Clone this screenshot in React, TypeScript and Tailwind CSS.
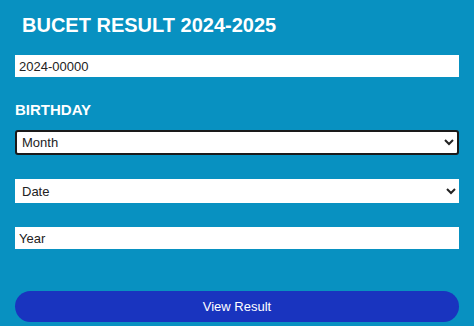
import React from "react";

export default function App() {
  return (
    <div
      className="w-[474px] h-[326px] overflow-hidden bg-[#0891c1] px-[15px]"
      style={{ fontFamily: '"Liberation Sans", Arial, sans-serif' }}
    >
      <h1 className="pt-[14px] pl-[7px] text-[20px] leading-[23px] font-bold text-white">
        BUCET RESULT 2024-2025
      </h1>
      <input
        defaultValue="2024-00000"
        className="mt-[18px] block w-full h-[22px] bg-white px-[4px] text-[13px] text-[#222] outline-none"
      />
      <div className="mt-[24px] text-[15px] leading-[17px] font-bold text-white">BIRTHDAY</div>
      <select
        defaultValue="Month"
        className="mt-[12px] block w-full h-[25px] bg-white rounded-[3px] border-2 border-[#1a1a1a] px-[1px] text-[13px] text-[#222] outline-none"
      >
        <option>Month</option>
      </select>
      <select
        defaultValue="Date"
        className="mt-[24px] block w-full h-[24px] bg-white px-[3px] text-[13px] text-[#222] outline-none"
      >
        <option>Date</option>
      </select>
      <input
        defaultValue="Year"
        className="mt-[24px] block w-full h-[22px] bg-white px-[4px] text-[13px] text-[#222] outline-none"
      />
      <button className="mt-[42px] block w-full h-[31px] rounded-full bg-[#1934bf] text-[13px] text-white">
        View Result
      </button>
    </div>
  );
}
